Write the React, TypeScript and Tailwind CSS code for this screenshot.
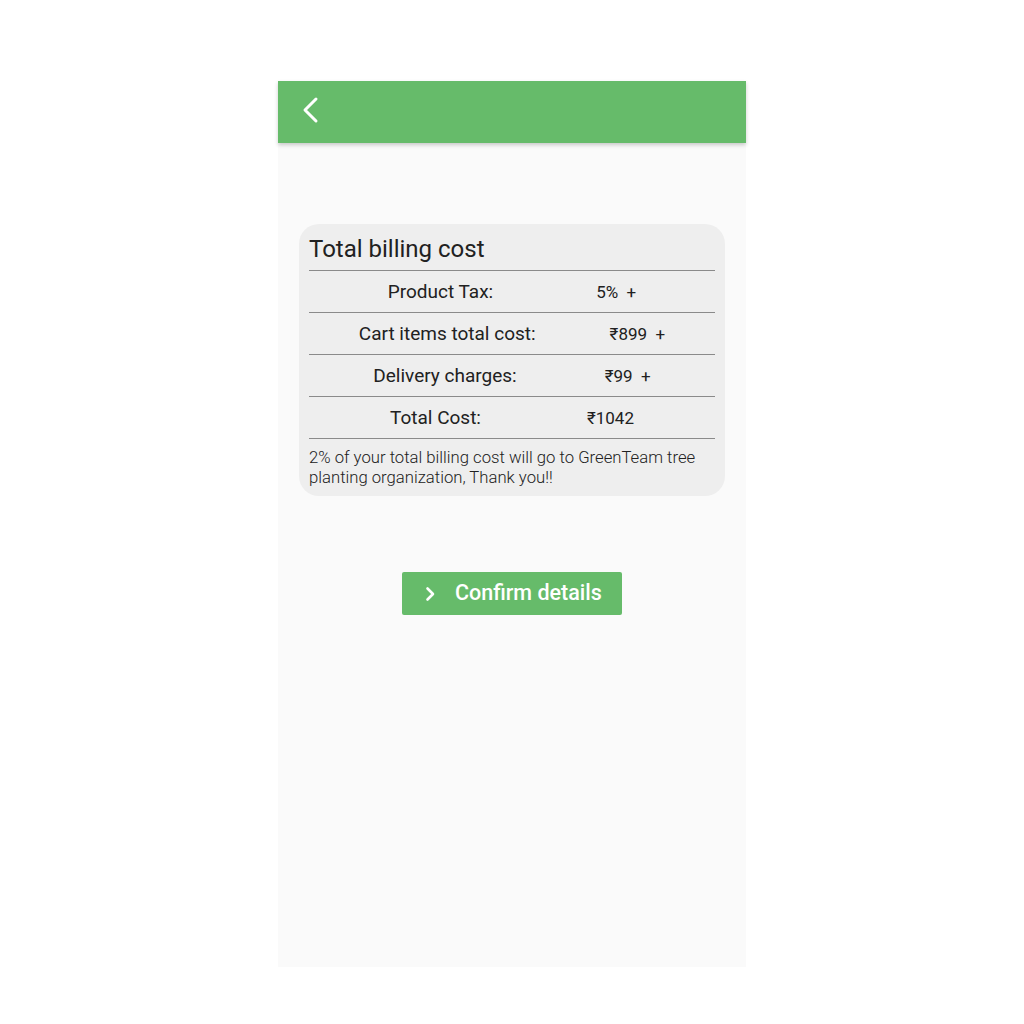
import React from "react";

const rows = [
  { label: "Product Tax:", value: "5%  +", gap: "gap-[103px]" },
  { label: "Cart items total cost:", value: "₹899  +", gap: "gap-[74px]" },
  { label: "Delivery charges:", value: "₹99  +", gap: "gap-[88px]" },
  { label: "Total Cost:", value: "₹1042", gap: "gap-[106px]" },
];

export default function App() {
  return (
    <div
      className="w-full min-h-[1024px] bg-white flex justify-center"
      style={{ fontFamily: "Roboto, 'Noto Sans', sans-serif" }}
    >
      <div className="mt-[81px] w-[468px] h-[886px] bg-[#fafafa] flex flex-col">
        <div className="h-[62px] bg-[#66bb6a] shadow-[0_2px_4px_rgba(0,0,0,0.2)] flex items-center pl-[24px] shrink-0">
          <svg width="18" height="28" viewBox="0 0 18 28" fill="none" className="-mt-[4px]">
            <path d="M14 3 L3 14 L14 25" stroke="white" strokeWidth="3" strokeLinecap="round" strokeLinejoin="round" />
          </svg>
        </div>

        <div className="mt-[81px] mx-[21px] bg-[#eeeeee] rounded-[20px] px-[10px] pt-[10px] pb-[8px]">
          <div className="text-[24px] leading-[30px] text-[#212121] mb-[6px]">Total billing cost</div>
          <div className="h-px bg-[#8a8a8a]" />
          {rows.map((r) => (
            <div key={r.label}>
              <div className={`h-[41px] pt-[2px] flex items-center justify-center ${r.gap}`}>
                <span className="text-[19px] text-[#212121]">{r.label}</span>
                <span className="text-[17px] text-[#212121] whitespace-pre">{r.value}</span>
              </div>
              <div className="h-px bg-[#8a8a8a]" />
            </div>
          ))}
          <div className="mt-[9px] text-[16.7px] leading-[20px] font-light text-[#212121]">
            2% of your total billing cost will go to GreenTeam tree planting organization, Thank you!!
          </div>
        </div>

        <div className="mt-[76px] flex justify-center">
          <button className="w-[220px] h-[43px] bg-[#66bb6a] rounded-[2px] flex items-center pl-[22px] text-white text-[21.5px] font-medium">
            <svg width="12" height="16" viewBox="0 0 12 16" fill="none" className="mr-[19px]">
              <path d="M3.5 2.5 L9 8 L3.5 13.5" stroke="white" strokeWidth="2.6" strokeLinecap="round" strokeLinejoin="round" />
            </svg>
            Confirm details
          </button>
        </div>
      </div>
    </div>
  );
}
